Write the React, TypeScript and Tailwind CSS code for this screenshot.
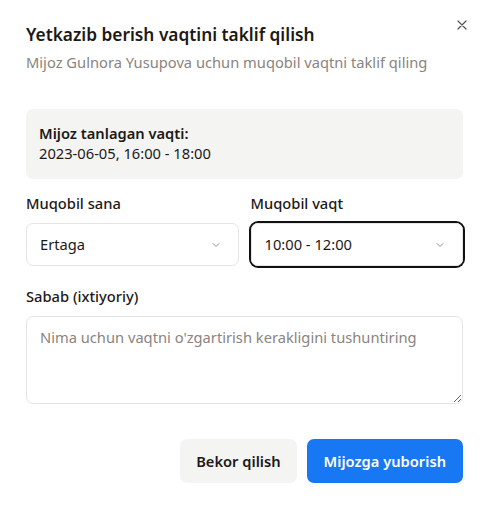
import React from "react";

const Chevron = () => (
  <svg width="12" height="12" viewBox="0 0 24 24" fill="none" stroke="#8a8580" strokeWidth="1.8" strokeLinecap="round" strokeLinejoin="round">
    <path d="M6 9l6 6 6-6" />
  </svg>
);

export default function App() {
  return (
    <div
      className="w-[488px] h-[506px] bg-white rounded-[8px] relative text-[#1c1917] overflow-hidden"
      style={{ fontFamily: '"Noto Sans", "Open Sans", sans-serif' }}
    >
      <button className="absolute right-[18px] top-[17px] text-[#57534e]">
        <svg width="16" height="16" viewBox="0 0 24 24" fill="none" stroke="currentColor" strokeWidth="1.8" strokeLinecap="round">
          <path d="M18 6L6 18M6 6l12 12" />
        </svg>
      </button>
      <div className="pl-[26px] pr-[25px] pt-[23px] flex flex-col">
        <h2 className="text-[17.3px] font-semibold leading-[24px]">Yetkazib berish vaqtini taklif qilish</h2>
        <p className="text-[14.7px] leading-[20px] text-[#8a8480] mt-[5px]">Mijoz Gulnora Yusupova uchun muqobil vaqtni taklif qiling</p>

        <div className="mt-[37px] bg-[#f4f4f3] rounded-[7px] px-[13px] py-[14px] h-[70px]">
          <div className="text-[14.7px] font-semibold leading-[20px]">Mijoz tanlagan vaqti:</div>
          <div className="text-[14.7px] leading-[20px]">2023-06-05, 16:00 - 18:00</div>
        </div>

        <div className="mt-[13px] grid grid-cols-2 gap-[12px]">
          <div className="flex flex-col">
            <label className="text-[14.7px] font-medium leading-[20px] mb-[10px] mt-[1px]">Muqobil sana</label>
            <div className="h-[43px] border border-[#e7e5e4] rounded-[7px] flex items-center justify-between pl-[13px] pr-[16px] text-[14.7px]">
              <span>Ertaga</span>
              <Chevron />
            </div>
          </div>
          <div className="flex flex-col">
            <label className="text-[14.7px] font-medium leading-[20px] mb-[10px] mt-[1px]">Muqobil vaqt</label>
            <div className="h-[43px] border border-[#e7e5e4] rounded-[7px] flex items-center justify-between pl-[13px] pr-[16px] text-[14.7px] ring-2 ring-[#111]">
              <span>10:00 - 12:00</span>
              <Chevron />
            </div>
          </div>
        </div>

        <label className="mt-[20px] text-[14.7px] font-medium leading-[20px]">Sabab (ixtiyoriy)</label>
        <textarea
          className="mt-[10px] h-[88px] border border-[#e7e5e4] rounded-[7px] px-[13px] py-[10px] text-[14.7px] leading-[20px] placeholder:text-[#8a8480] outline-none"
          placeholder="Nima uchun vaqtni o'zgartirish kerakligini tushuntiring"
          style={{ fontFamily: 'inherit' }}
        />

        <div className="mt-[35px] flex justify-end gap-[10px]">
          <button className="h-[44px] px-[16px] rounded-[7px] bg-[#f4f4f3] text-[14.7px] font-semibold">Bekor qilish</button>
          <button className="h-[44px] px-[17px] rounded-[7px] bg-[#1877f2] text-white text-[14.7px] font-semibold">Mijozga yuborish</button>
        </div>
      </div>
    </div>
  );
}
